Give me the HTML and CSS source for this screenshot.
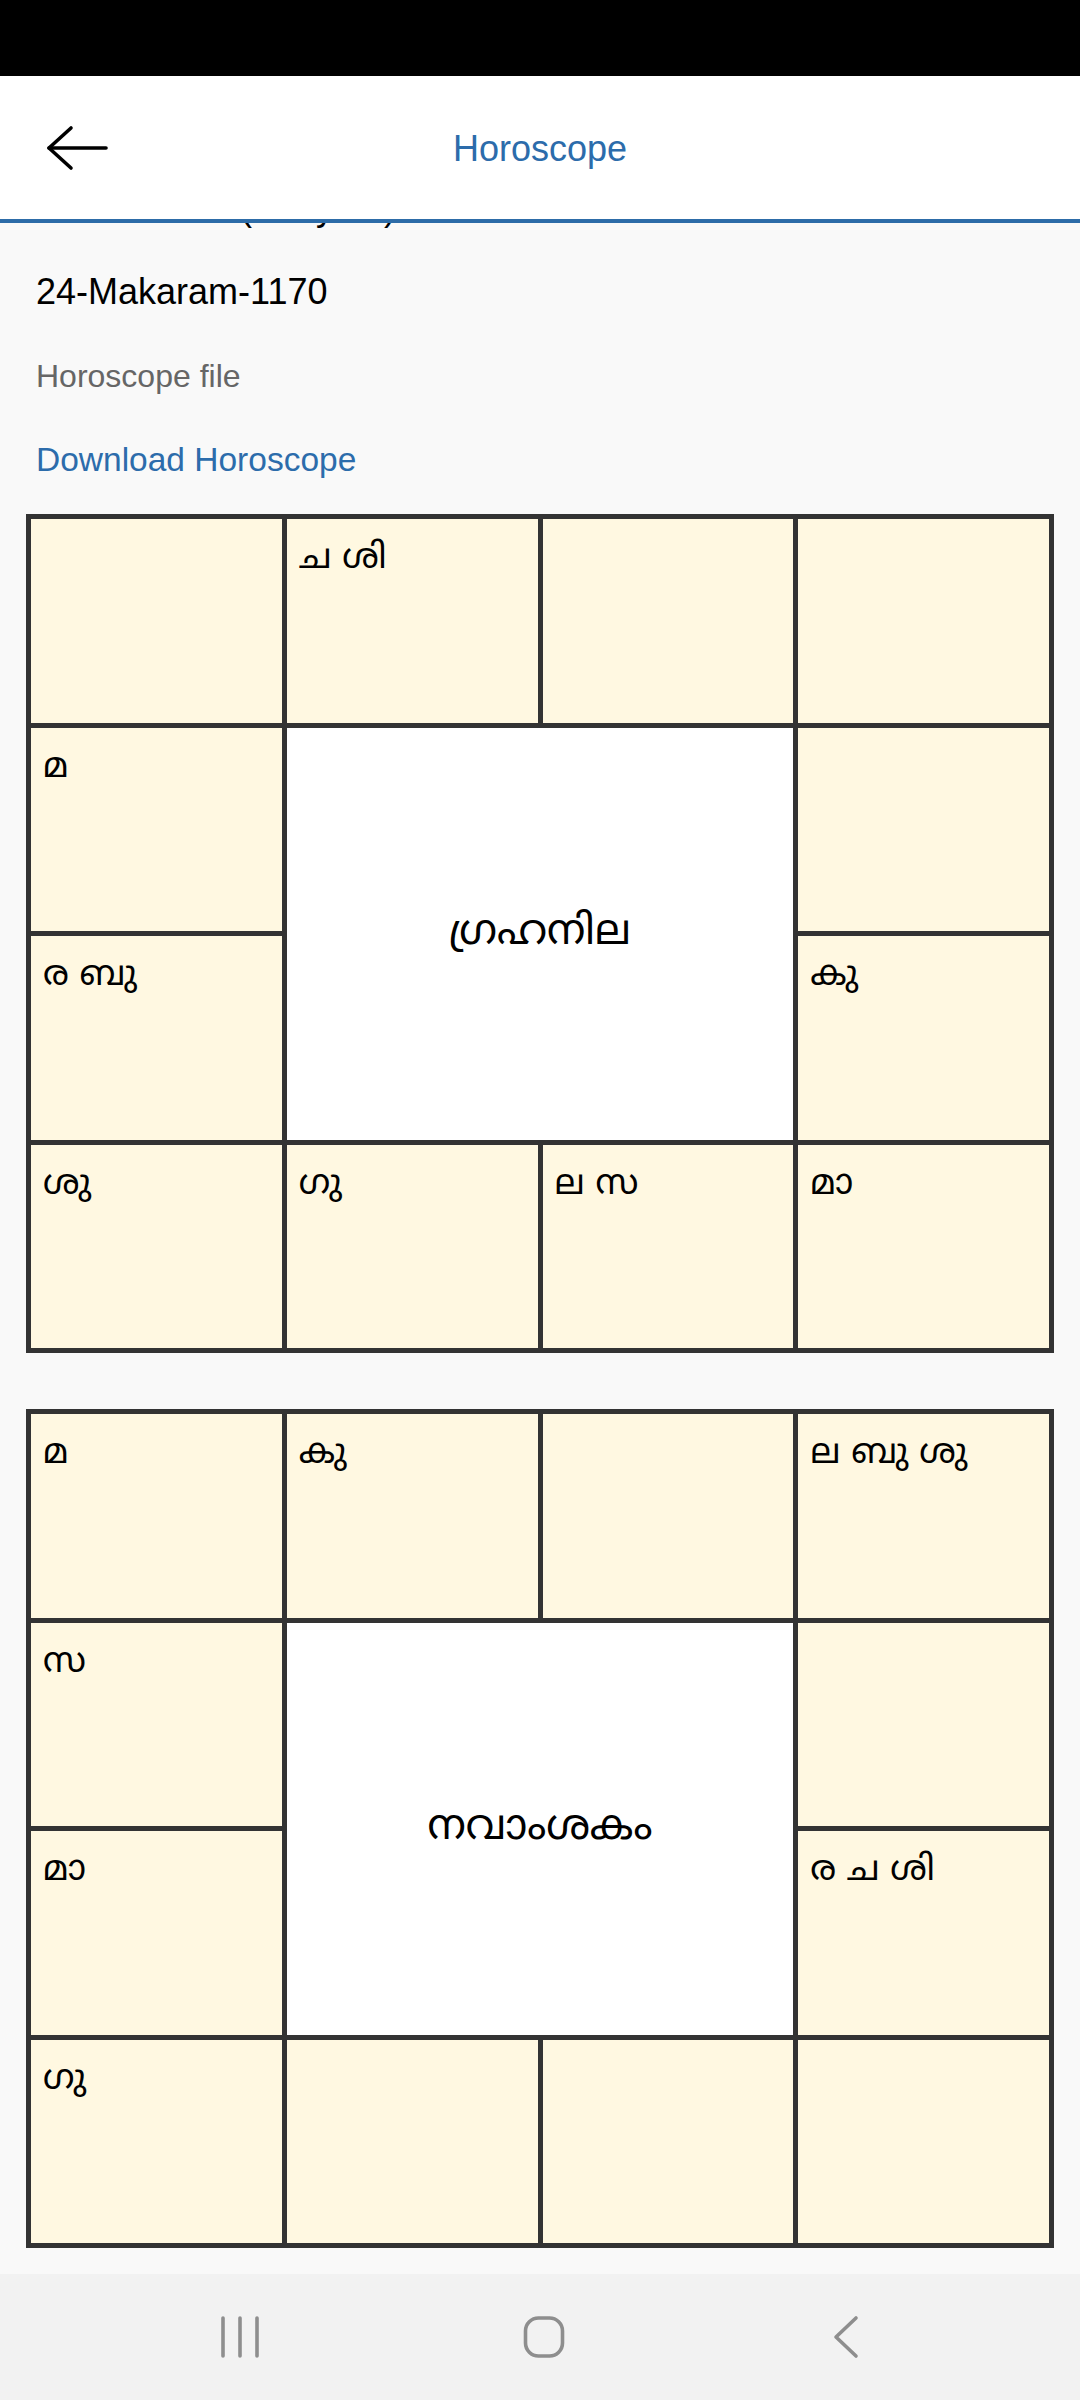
FILE: index.html
```html
<!DOCTYPE html>
<html lang="ml">
<head>
<meta charset="utf-8">
<title>Horoscope</title>
<link rel="stylesheet" href="styles.css">
</head>
<body>
<div class="screen">
  <div class="statusbar"></div>
  <header class="appbar">
    <div class="appbar-left">
      <svg class="back" width="64" height="48" viewBox="0 0 64 48" aria-hidden="true">
        <path d="M3 24 H60" />
        <path d="M25 4 L3 24 L25 44" />
      </svg>
    </div>
    <h1 class="title">Horoscope</h1>
    <div class="appbar-right"></div>
  </header>
  <main class="content">
    <p class="line value ghost">Nakshatram (Pooyam)</p>
    <p class="line value">24-Makaram-1170</p>
    <p class="line label">Horoscope file</p>
    <p class="line link">Download Horoscope</p>

    <div class="chart">
      <div class="cell"></div>
      <div class="cell">ച ശി</div>
      <div class="cell"></div>
      <div class="cell"></div>
      <div class="cell">മ</div>
      <div class="center">ഗ്രഹനില</div>
      <div class="cell"></div>
      <div class="cell">ര ബു</div>
      <div class="cell">കു</div>
      <div class="cell">ശു</div>
      <div class="cell">ഗു</div>
      <div class="cell">ല സ</div>
      <div class="cell">മാ</div>
    </div>

    <div class="chart chart-second">
      <div class="cell">മ</div>
      <div class="cell">കു</div>
      <div class="cell"></div>
      <div class="cell">ല ബു ശു</div>
      <div class="cell">സ</div>
      <div class="center">നവാംശകം</div>
      <div class="cell"></div>
      <div class="cell">മാ</div>
      <div class="cell">ര ച ശി</div>
      <div class="cell">ഗു</div>
      <div class="cell"></div>
      <div class="cell"></div>
      <div class="cell"></div>
    </div>
  </main>
  <nav class="navbar">
    <svg class="nav-icon recents" width="44" height="44" viewBox="0 0 44 44" aria-hidden="true">
      <path d="M5 3 V41 M22 3 V41 M39 3 V41" />
    </svg>
    <svg class="nav-icon home" width="48" height="48" viewBox="0 0 48 48" aria-hidden="true">
      <rect x="5.5" y="5" width="37" height="38" rx="13" ry="13" />
    </svg>
    <svg class="nav-icon backnav" width="44" height="44" viewBox="0 0 44 44" aria-hidden="true">
      <path d="M33 3 L13 22 L33 41" />
    </svg>
  </nav>
</div>
</body>
</html>
```

FILE: styles.css
```css
* { box-sizing: border-box; }

html, body {
  margin: 0;
  padding: 0;
  background: #f9f9f9;
}

.screen {
  width: 1080px;
  height: 2400px;
  display: flex;
  flex-direction: column;
  font-family: "Liberation Sans", Arial, sans-serif;
  color: #000;
  overflow: hidden;
}

.statusbar {
  height: 76px;
  flex: 0 0 76px;
  background: #000;
}

.appbar {
  flex: 0 0 147px;
  height: 147px;
  background: #fff;
  border-bottom: 4px solid #2d6ca8;
  display: grid;
  grid-template-columns: 1fr auto 1fr;
  align-items: center;
  position: relative;
  z-index: 2;
}

.appbar-left {
  padding-left: 46px;
  display: flex;
  align-items: center;
}

.back {
  display: block;
  fill: none;
  stroke: #000;
  stroke-width: 3.6;
  stroke-linecap: round;
  stroke-linejoin: round;
}

.title {
  margin: 0;
  font-weight: normal;
  font-size: 36px;
  color: #2c6cab;
  line-height: 40px;
  padding-top: 2px;
}

.content {
  flex: 1 1 auto;
  overflow: hidden;
  padding-left: 36px;
}

.line {
  margin: 0;
  height: 84px;
  line-height: 84px;
  white-space: nowrap;
}

.ghost {
  margin-top: -57px;
}

.value {
  font-size: 36px;
  color: #000;
}

.label {
  font-size: 32px;
  color: #666;
}

.link {
  font-size: 33.5px;
  color: #2c6cab;
}

.chart {
  margin: 12px 0 0 -10px;
  width: 1028px;
  height: 839px;
  display: grid;
  grid-template-columns: repeat(4, 1fr);
  grid-template-rows: repeat(4, 1fr);
  gap: 5px;
  padding: 5px;
  background: #333;
  font-family: "Noto Sans Malayalam", "Noto Sans", sans-serif;
}

.chart-second {
  margin-top: 56px;
}

.cell {
  background: #fff8e1;
  padding: 18px 12px 0;
  font-size: 35px;
  line-height: 46px;
  white-space: nowrap;
}

.center {
  grid-column: 2 / 4;
  grid-row: 2 / 4;
  background: #fff;
  display: flex;
  align-items: center;
  justify-content: center;
  font-size: 42px;
}

.navbar {
  flex: 0 0 126px;
  height: 126px;
  background: #f2f2f2;
  display: flex;
  align-items: center;
  justify-content: flex-start;
  padding-left: 218px;
}

.nav-icon {
  display: block;
  fill: none;
  stroke: #8e8e8e;
  stroke-width: 3.6;
  stroke-linecap: round;
  stroke-linejoin: round;
}

.home {
  margin-left: 258px;
}

.backnav {
  margin-left: 255px;
}
```
